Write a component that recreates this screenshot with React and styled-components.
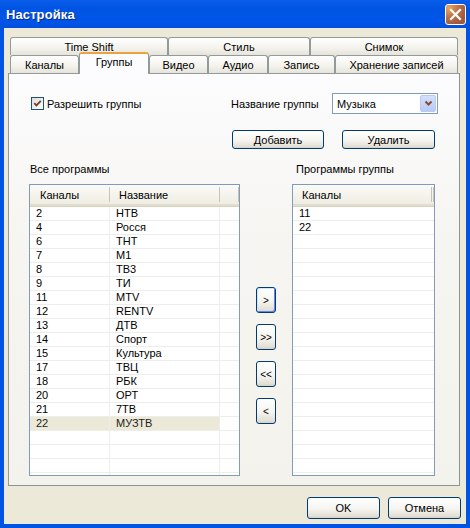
import React from "react";
import styled, { createGlobalStyle, css } from "styled-components";

const Global = createGlobalStyle`
  html, body { margin: 0; padding: 0; background: #0054E3; }
  body { font-family: "Liberation Sans", Arial, sans-serif; font-size: 11px; color: #000; }
  * { box-sizing: border-box; }
`;

const Window = styled.div`
  width: 470px;
  height: 528px;
  display: flex;
  flex-direction: column;
  background: #0054E3;
  padding: 0 4px 4px;
  overflow: hidden;
`;

const TitleBar = styled.div`
  height: 28px;
  margin: 0 -4px;
  flex: none;
  display: flex;
  align-items: center;
  justify-content: space-between;
  padding: 0 4px 0 6px;
  background: linear-gradient(#0A5EEA, #0054E3 30%, #0055E8 75%, #0050DC);
`;

const Title = styled.div`
  color: #fff;
  font-weight: bold;
  font-size: 13px;
  letter-spacing: 0.1px;
  text-shadow: 1px 1px 0 #0A2A8A;
`;

const CloseBtn = styled.div`
  width: 21px;
  height: 21px;
  border: 1px solid #fff;
  border-radius: 3px;
  background: radial-gradient(circle at 15% 15%, #EBA65C 0%, #C0714A 40%, #A35A3B 75%);
  display: flex;
  align-items: center;
  justify-content: center;
`;

const Client = styled.div`
  flex: 1;
  background: #ECE9D8;
  display: flex;
  flex-direction: column;
  padding: 9px 6px 0 4px;
`;

const TabRow = styled.div`
  display: flex;
  align-items: flex-end;
  height: 18px;
  margin-left: 2px;
  position: relative;
  z-index: ${(p) => p.$z};
`;

const Tab = styled.div`
  flex: none;
  width: ${(p) => p.$w}px;
  height: 18px;
  border: 1px solid #919B9C;
  border-bottom: none;
  border-radius: 3px 3px 0 0;
  background: linear-gradient(#FFFFFF, #F3F2EC 60%, #E6E4DA);
  display: flex;
  align-items: center;
  justify-content: center;
  padding-top: 1px;
  white-space: nowrap;
  ${(p) =>
    p.$active &&
    css`
      height: 22px;
      margin-bottom: -1px;
      border-top: 2px solid #E9A43F;
      background: #FCFCFE;
      padding-top: 0;
      padding-bottom: 4px;
    `}
`;

const Panel = styled.div`
  width: 452px;
  height: 413px;
  flex: none;
  border: 1px solid #919B9C;
  border-right-color: #8C9596;
  border-bottom-color: #8C9596;
  background: linear-gradient(#FCFCFE, #F6F5F1 40%, #F3F2EC);
  display: flex;
  flex-direction: column;
  padding: 19px 0 0 20px;
`;

const ControlRow = styled.div`
  display: flex;
  align-items: center;
  height: 21px;
`;

const CheckField = styled.label`
  width: 200px;
  margin-left: 2px;
  display: flex;
  align-items: center;
  gap: 3px;
`;

const CheckBox = styled.span`
  width: 13px;
  height: 13px;
  border: 1px solid #1C5180;
  background: linear-gradient(135deg, #DCDCD7, #FFFFFF);
  display: flex;
  align-items: center;
  justify-content: center;
`;

const FieldLabel = styled.span`
  width: 101px;
`;

const Combo = styled.div`
  width: 106px;
  height: 21px;
  border: 1px solid #7F9DB9;
  background: #fff;
  display: flex;
  align-items: center;
  justify-content: space-between;
  padding: 1px 1px 1px 4px;
`;

const ComboButton = styled.div`
  width: 16px;
  height: 17px;
  border-radius: 2px;
  background: linear-gradient(#D3E0FB, #B7CBF6);
  border: 1px solid #BAC9F3;
  display: flex;
  align-items: center;
  justify-content: center;
`;

const ActionRow = styled.div`
  display: flex;
  gap: 18px;
  margin: 16px 0 0 203px;
`;

const Button = styled.button`
  font: inherit;
  font-size: ${(p) => p.$fs || 11}px;
  color: #000;
  width: ${(p) => p.$w}px;
  height: ${(p) => p.$h}px;
  padding: 0;
  border: 1px solid #003C74;
  border-radius: 3px;
  background: linear-gradient(#FFFFFF, #F5F4EF 55%, #E3E0D5 90%, #D6D0C5);
  display: flex;
  align-items: center;
  justify-content: center;
  ${(p) =>
    p.$default &&
    css`
      box-shadow: inset 1px 1px 0 #CEE7FF, inset -1px -1px 0 #6982EE;
    `}
`;

const Columns = styled.div`
  display: grid;
  grid-template-columns: 211px 20px 143px;
  column-gap: 16px;
`;

const SectionLabel = styled.div`
  grid-column: ${(p) => p.$col};
  padding-left: ${(p) => p.$pad}px;
  line-height: 13px;
  margin-top: 14px;
  margin-bottom: 8px;
`;

const ListBox = styled.div`
  height: 292px;
  border: 1px solid #7F9DB9;
  background: #fff;
  overflow: hidden;
  display: flex;
  flex-direction: column;
`;

const Header = styled.div`
  flex: none;
  display: grid;
  grid-template-columns: ${(p) => p.$cols};
  height: 21px;
  background: linear-gradient(#FBFAF6, #EFEDE3);
  border-bottom: 2px solid #E2DECD;
  box-shadow: 0 1px 0 #D6D2C2;
`;

const HeaderCell = styled.div`
  display: flex;
  align-items: center;
  padding-left: ${(p) => p.$pad}px;
  background: linear-gradient(#C7C5B2, #C7C5B2) no-repeat right 0 center / 1px 15px;
`;

const Body = styled.div`
  flex: 1;
  overflow: hidden;
  margin-top: 1px;
`;

const Row = styled.div`
  display: grid;
  grid-template-columns: ${(p) => p.$cols};
  height: 14px;
`;

const Cell = styled.div`
  border-bottom: 1px solid #EDEDE9;
  border-right: ${(p) => (p.$last ? "none" : "1px solid #EDEDE9")};
  padding-left: 6px;
  line-height: 13px;
  white-space: nowrap;
  overflow: hidden;
  ${(p) =>
    p.$sel &&
    css`
      background: #ECE9D8;
      color: #222;
    `}
`;

const MoveButtons = styled.div`
  display: flex;
  flex-direction: column;
  gap: 11px;
  padding-top: 103px;
`;

const Footer = styled.div`
  display: flex;
  justify-content: flex-end;
  gap: 8px;
  padding-top: 11px;
  margin-right: -1px;
`;

const channels = [
  ["2", "НТВ"],
  ["4", "Росся"],
  ["6", "ТНТ"],
  ["7", "М1"],
  ["8", "ТВ3"],
  ["9", "ТИ"],
  ["11", "MTV"],
  ["12", "RENTV"],
  ["13", "ДТВ"],
  ["14", "Спорт"],
  ["15", "Культура"],
  ["17", "ТВЦ"],
  ["18", "РБК"],
  ["20", "ОРТ"],
  ["21", "7ТВ"],
  ["22", "МУЗТВ"],
];

const groupChannels = ["11", "22"];

const LEFT_COLS = "80px 110px 1fr";
const RIGHT_COLS = "139px 1fr";

function AllList() {
  const rows = [...channels];
  while (rows.length < 20) rows.push(["", ""]);
  return (
    <ListBox>
      <Header $cols={LEFT_COLS}>
        <HeaderCell $pad={10}>Каналы</HeaderCell>
        <HeaderCell $pad={9}>Название</HeaderCell>
        <HeaderCell $pad={0} />
      </Header>
      <Body>
        {rows.map(([num, name], i) => {
          const sel = num === "22";
          return (
            <Row key={i} $cols={LEFT_COLS}>
              <Cell $sel={sel}>{num}</Cell>
              <Cell $sel={sel}>{name}</Cell>
              <Cell $last />
            </Row>
          );
        })}
      </Body>
    </ListBox>
  );
}

function GroupList() {
  const rows = [...groupChannels];
  while (rows.length < 20) rows.push("");
  return (
    <ListBox>
      <Header $cols={RIGHT_COLS}>
        <HeaderCell $pad={9}>Каналы</HeaderCell>
        <HeaderCell $pad={0} />
      </Header>
      <Body>
        {rows.map((num, i) => (
          <Row key={i} $cols={RIGHT_COLS}>
            <Cell $last>{num}</Cell>
            <Cell $last />
          </Row>
        ))}
      </Body>
    </ListBox>
  );
}

export default function App() {
  return (
    <>
      <Global />
      <Window>
        <TitleBar>
          <Title>Настройка</Title>
          <CloseBtn>
            <svg width="13" height="13" viewBox="0 0 13 13">
              <path d="M2 2 L11 11 M11 2 L2 11" stroke="#fff" strokeWidth="2.2" strokeLinecap="square" />
            </svg>
          </CloseBtn>
        </TitleBar>
        <Client>
          <TabRow $z={1}>
            <Tab $w={158}>Time Shift</Tab>
            <Tab $w={142}>Стиль</Tab>
            <Tab $w={148}>Снимок</Tab>
          </TabRow>
          <TabRow $z={3}>
            <Tab $w={69}>Каналы</Tab>
            <Tab $w={70} $active>Группы</Tab>
            <Tab $w={59}>Видео</Tab>
            <Tab $w={60}>Аудио</Tab>
            <Tab $w={67}>Запись</Tab>
            <Tab $w={123}>Хранение записей</Tab>
          </TabRow>
          <Panel>
            <ControlRow>
              <CheckField>
                <CheckBox>
                  <svg width="9" height="9" viewBox="0 0 9 9">
                    <path d="M1.3 4.2 L3.4 6.4 L7.8 1.8" fill="none" stroke="#7A3B2A" strokeWidth="1.8" />
                  </svg>
                </CheckBox>
                Разрешить группы
              </CheckField>
              <FieldLabel>Название группы</FieldLabel>
              <Combo>
                <span>Музыка</span>
                <ComboButton>
                  <svg width="9" height="7" viewBox="0 0 9 7">
                    <path d="M1.5 1.5 L4.5 4.5 L7.5 1.5" fill="none" stroke="#8A4A35" strokeWidth="2" />
                  </svg>
                </ComboButton>
              </Combo>
            </ControlRow>
            <ActionRow>
              <Button $w={92} $h={19}>Добавить</Button>
              <Button $w={93} $h={19}>Удалить</Button>
            </ActionRow>
            <Columns>
              <SectionLabel $col={1} $pad={1}>Все программы</SectionLabel>
              <SectionLabel $col={3} $pad={4}>Программы группы</SectionLabel>
              <AllList />
              <MoveButtons>
                <Button $w={20} $h={26} $fs={10} $default>&gt;</Button>
                <Button $w={20} $h={26} $fs={10}>&gt;&gt;</Button>
                <Button $w={20} $h={26} $fs={10}>&lt;&lt;</Button>
                <Button $w={20} $h={26} $fs={10}>&lt;</Button>
              </MoveButtons>
              <GroupList />
            </Columns>
          </Panel>
          <Footer>
            <Button $w={73} $h={22}>OK</Button>
            <Button $w={73} $h={22}>Отмена</Button>
          </Footer>
        </Client>
      </Window>
    </>
  );
}
